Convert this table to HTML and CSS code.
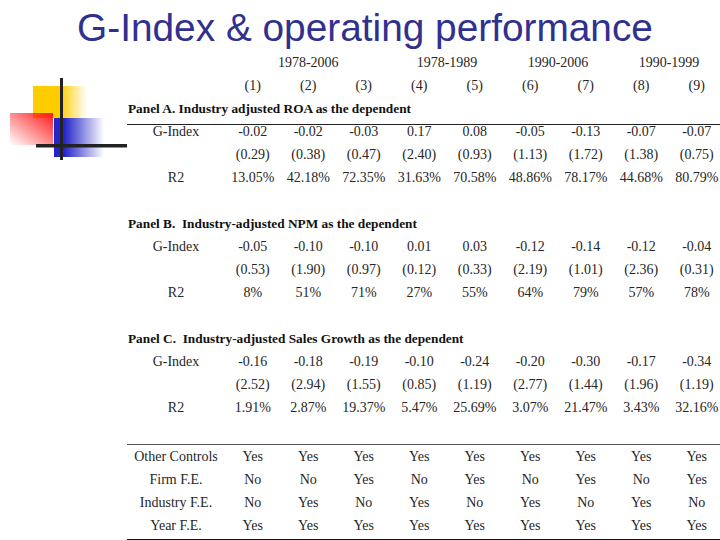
FILE: index.html
```html
<!DOCTYPE html>
<html>
<head>
<meta charset="utf-8">
<link rel="stylesheet" href="styles.css">
</head>
<body>
<h1 class="title">G-Index &amp; operating performance</h1>
<div class="content">
  <div class="logo-col">
    <svg class="logo" width="127" height="120" viewBox="0 0 127 120">
      <defs>
        <linearGradient id="gy" x1="0" y1="0" x2="1" y2="0">
          <stop offset="0" stop-color="#ffcc00"/>
          <stop offset="0.5" stop-color="#ffcc00"/>
          <stop offset="1" stop-color="#ffcc00" stop-opacity="0"/>
        </linearGradient>
        <linearGradient id="gr" x1="1" y1="0" x2="0" y2="1">
          <stop offset="0" stop-color="#ff1a1a"/>
          <stop offset="1" stop-color="#ff1a1a" stop-opacity="0"/>
        </linearGradient>
        <linearGradient id="gb" x1="0" y1="0" x2="1" y2="0">
          <stop offset="0" stop-color="#2424c8"/>
          <stop offset="0.2" stop-color="#2424c8"/>
          <stop offset="1" stop-color="#2424c8" stop-opacity="0"/>
        </linearGradient>
      </defs>
      <rect x="33" y="36" width="54" height="32" fill="url(#gy)"/>
      <rect x="10" y="63" width="43" height="32" fill="url(#gr)"/>
      <rect x="54" y="68" width="50" height="39" fill="url(#gb)"/>
      <rect x="60" y="28" width="3" height="82" fill="#222"/>
      <rect x="36" y="94" width="91" height="3.5" fill="#222"/>
    </svg>
  </div>
  <div class="table">
    <div class="row periods">
      <span class="p1">1978-2006</span>
      <span class="p2">1978-1989</span>
      <span class="p3">1990-2006</span>
      <span class="p4">1990-1999</span>
    </div>
    <div class="row">
      <span></span><span>(1)</span><span>(2)</span><span>(3)</span><span>(4)</span><span>(5)</span><span>(6)</span><span>(7)</span><span>(8)</span><span>(9)</span>
    </div>
    <div class="panel panel-ruled">Panel A. Industry adjusted ROA as the dependent</div>
    <div class="row first">
      <span>G-Index</span><span>-0.02</span><span>-0.02</span><span>-0.03</span><span>0.17</span><span>0.08</span><span>-0.05</span><span>-0.13</span><span>-0.07</span><span>-0.07</span>
    </div>
    <div class="row">
      <span></span><span>(0.29)</span><span>(0.38)</span><span>(0.47)</span><span>(2.40)</span><span>(0.93)</span><span>(1.13)</span><span>(1.72)</span><span>(1.38)</span><span>(0.75)</span>
    </div>
    <div class="row">
      <span>R2</span><span>13.05%</span><span>42.18%</span><span>72.35%</span><span>31.63%</span><span>70.58%</span><span>48.86%</span><span>78.17%</span><span>44.68%</span><span>80.79%</span>
    </div>
    <div class="spacer"></div>
    <div class="panel">Panel B.&nbsp; Industry-adjusted NPM as the dependent</div>
    <div class="row">
      <span>G-Index</span><span>-0.05</span><span>-0.10</span><span>-0.10</span><span>0.01</span><span>0.03</span><span>-0.12</span><span>-0.14</span><span>-0.12</span><span>-0.04</span>
    </div>
    <div class="row">
      <span></span><span>(0.53)</span><span>(1.90)</span><span>(0.97)</span><span>(0.12)</span><span>(0.33)</span><span>(2.19)</span><span>(1.01)</span><span>(2.36)</span><span>(0.31)</span>
    </div>
    <div class="row">
      <span>R2</span><span>8%</span><span>51%</span><span>71%</span><span>27%</span><span>55%</span><span>64%</span><span>79%</span><span>57%</span><span>78%</span>
    </div>
    <div class="spacer"></div>
    <div class="panel">Panel C.&nbsp; Industry-adjusted Sales Growth as the dependent</div>
    <div class="row">
      <span>G-Index</span><span>-0.16</span><span>-0.18</span><span>-0.19</span><span>-0.10</span><span>-0.24</span><span>-0.20</span><span>-0.30</span><span>-0.17</span><span>-0.34</span>
    </div>
    <div class="row">
      <span></span><span>(2.52)</span><span>(2.94)</span><span>(1.55)</span><span>(0.85)</span><span>(1.19)</span><span>(2.77)</span><span>(1.44)</span><span>(1.96)</span><span>(1.19)</span>
    </div>
    <div class="row">
      <span>R2</span><span>1.91%</span><span>2.87%</span><span>19.37%</span><span>5.47%</span><span>25.69%</span><span>3.07%</span><span>21.47%</span><span>3.43%</span><span>32.16%</span>
    </div>
    <div class="controls">
      <div class="row">
        <span>Other Controls</span><span>Yes</span><span>Yes</span><span>Yes</span><span>Yes</span><span>Yes</span><span>Yes</span><span>Yes</span><span>Yes</span><span>Yes</span>
      </div>
      <div class="row">
        <span>Firm F.E.</span><span>No</span><span>No</span><span>Yes</span><span>No</span><span>Yes</span><span>No</span><span>Yes</span><span>No</span><span>Yes</span>
      </div>
      <div class="row">
        <span>Industry F.E.</span><span>No</span><span>Yes</span><span>No</span><span>Yes</span><span>No</span><span>Yes</span><span>No</span><span>Yes</span><span>No</span>
      </div>
      <div class="row">
        <span>Year F.E.</span><span>Yes</span><span>Yes</span><span>Yes</span><span>Yes</span><span>Yes</span><span>Yes</span><span>Yes</span><span>Yes</span><span>Yes</span>
      </div>
    </div>
  </div>
</div>
</body>
</html>
```

FILE: styles.css
```css
html, body {
  margin: 0;
  padding: 0;
  background: #ffffff;
}
body {
  width: 720px;
  height: 540px;
  overflow: hidden;
}
.title {
  margin: 0;
  height: 46px;
  padding-top: 5px;
  padding-left: 10px;
  font-family: "Liberation Sans", Arial, sans-serif;
  font-weight: normal;
  font-size: 38.8px;
  line-height: 46px;
  text-align: center;
  color: #30308f;
}
.content {
  display: flex;
}
.logo-col {
  width: 127px;
  flex: none;
}
.logo {
  display: block;
  margin-top: -1px;
}
.table {
  width: 593px;
  overflow: hidden;
  font-family: "Liberation Serif", "Times New Roman", serif;
  font-size: 14px;
  color: #262626;
}
.row {
  display: grid;
  grid-template-columns: 98px repeat(9, 55.5px);
  width: 597.5px;
  height: 23px;
  line-height: 23px;
  text-align: center;
  white-space: nowrap;
}
.periods .p1 { grid-column: 2 / 5; }
.periods .p2 { grid-column: 5 / 7; }
.periods .p3 { grid-column: 7 / 9; }
.periods .p4 { grid-column: 9 / 11; }
.panel {
  height: 23px;
  line-height: 23px;
  padding-left: 1px;
  font-weight: bold;
  font-size: 13.3px;
  color: #111;
  white-space: nowrap;
}
.panel-ruled {
  height: 27px;
  border-bottom: 1.5px solid #222;
}
.row.first {
  height: 18px;
  line-height: 14px;
}
.spacer {
  height: 23px;
}
.controls {
  margin-top: 25px;
  border-top: 1.5px solid #555;
  border-bottom: 2px solid #111;
  padding-bottom: 2px;
}
```
